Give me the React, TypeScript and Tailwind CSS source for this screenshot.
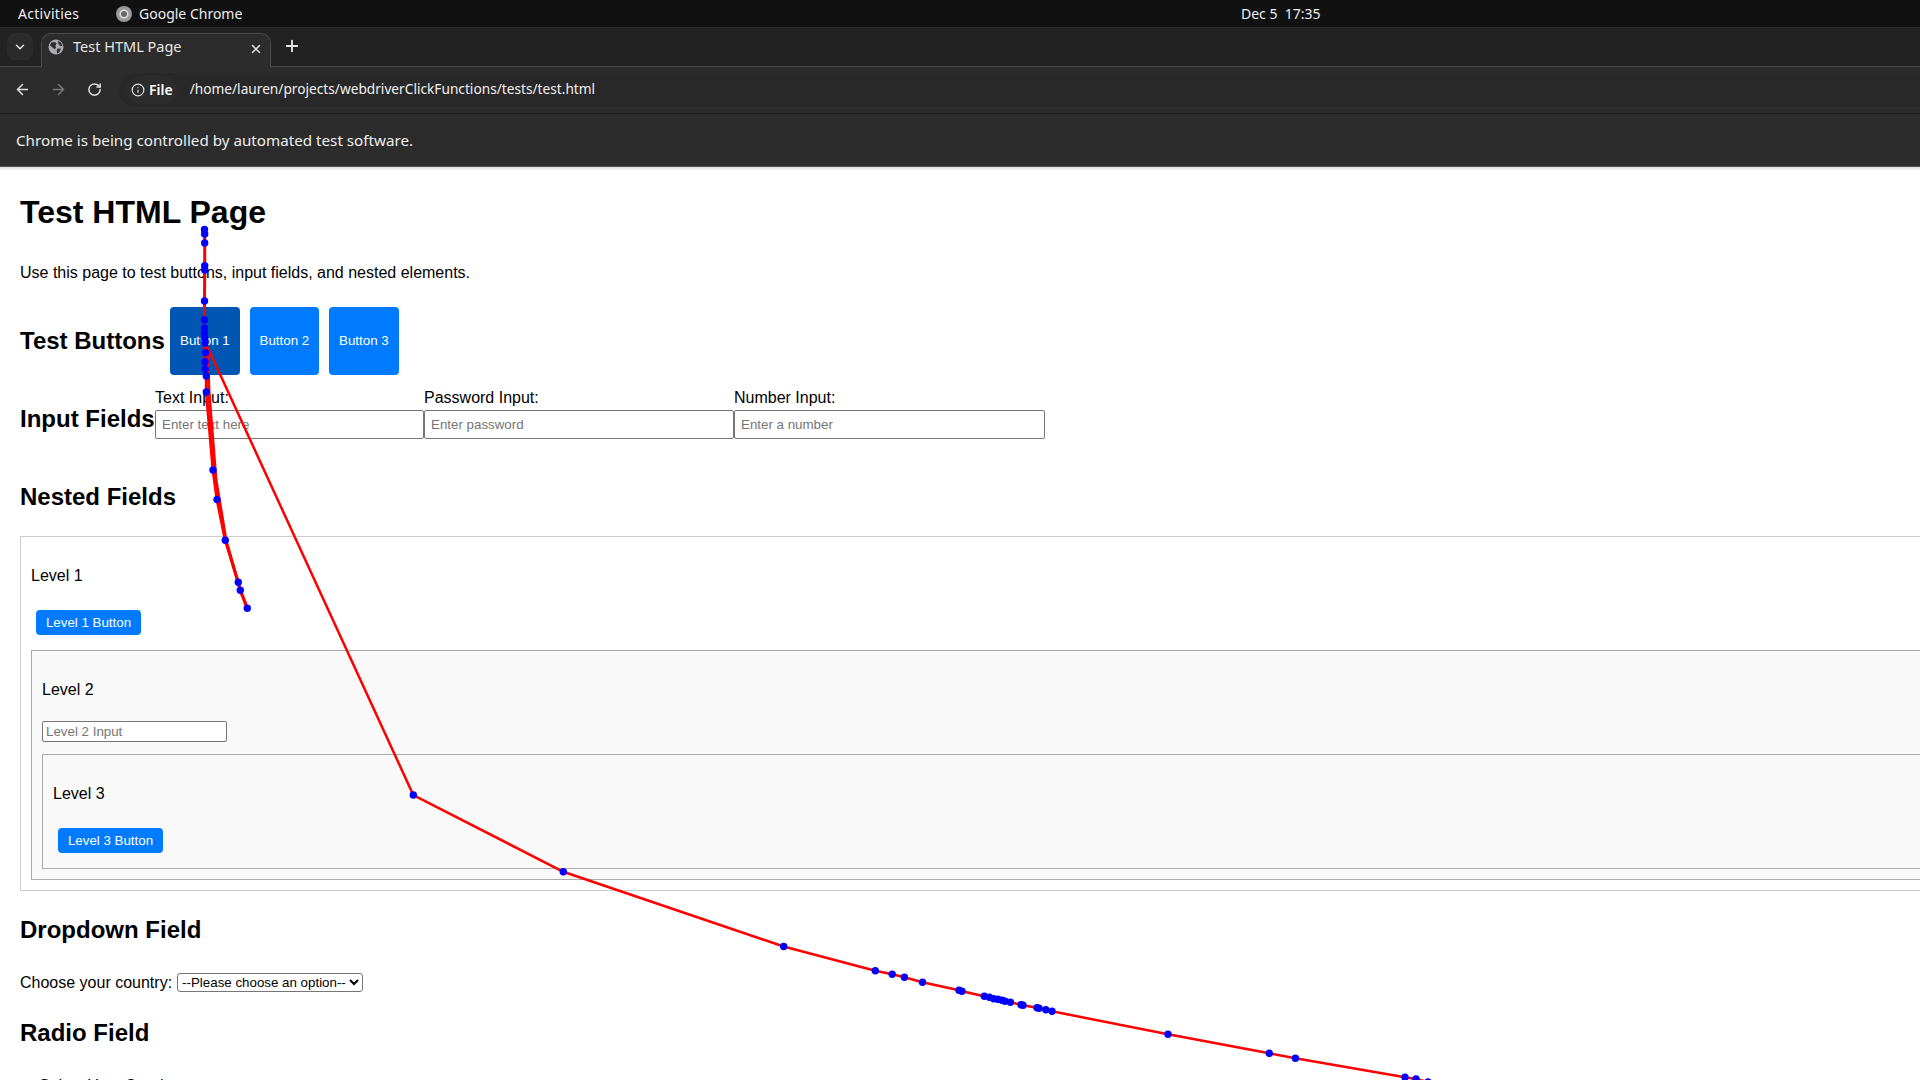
import { ArrowLeft, ArrowRight, ChevronDown, Info, Plus, RotateCw, X } from 'lucide-react'

const pageFont = "font-['Liberation_Sans',Arial,sans-serif]"
const chromeFont = "font-['Noto_Sans',sans-serif]"

const trailOne: [number, number][] = [
  [204.5, 229.5], [204.7, 234], [204.7, 243], [204.7, 265.7], [204.7, 270], [204.5, 301], [204.5, 320],
  [204.5, 328], [204.5, 333], [204.6, 338], [204.8, 343], [205.5, 352.7], [205, 361.7], [205.3, 369],
  [206.3, 376], [206.3, 392], [213, 470], [217, 499.6], [225.3, 540.3], [238.3, 582.3], [240.3, 590.3], [247.3, 608.3],
]

const trailBack: [number, number][] = [
  [247.3, 608.3], [240.3, 590.3], [226, 540.3], [216, 480], [209, 392], [207.5, 347],
]

const trailTwo: [number, number][] = [
  [207.5, 347], [413.3, 795], [563.3, 871.8], [783.7, 946.5], [875.3, 970.7], [892.2, 974.3], [904.4, 977.3],
  [922.5, 982.3], [959, 990.3], [962, 991.3], [984.3, 996.3], [989.4, 997.3], [993.6, 998.7], [997.8, 999.3],
  [1002, 1000.3], [1005, 1001.3], [1010.4, 1002.3], [1021, 1004.7], [1023, 1005.3], [1037, 1007.7], [1039, 1008.3],
  [1045.8, 1009.7], [1052, 1011.3], [1168, 1034.3], [1269.3, 1053.3], [1295.4, 1058.3], [1405, 1077.3], [1416, 1079], [1428, 1082],
]

function toPoints(list: [number, number][]) {
  return list.map(([x, y]) => `${x},${y}`).join(' ')
}

function MouseTrail() {
  return (
    <svg className="absolute left-0 top-0 pointer-events-none" width="1920" height="1080" viewBox="0 0 1920 1080">
      <polyline points={toPoints(trailOne)} fill="none" stroke="#ff0000" strokeWidth="3" />
      <polyline points={toPoints(trailBack)} fill="none" stroke="#ff0000" strokeWidth="3" />
      <polyline points={toPoints(trailTwo)} fill="none" stroke="#ff0000" strokeWidth="2.5" />
      {[...trailOne, ...trailTwo.slice(1)].map(([x, y]) => (
        <circle key={`${x}-${y}`} cx={x} cy={y} r="3.7" fill="#0000ff" />
      ))}
    </svg>
  )
}

function ChromeLogo() {
  return (
    <svg width="16" height="16" viewBox="0 0 16 16">
      <circle cx="8" cy="8" r="8" fill="#9a9a9a" />
      <circle cx="8" cy="8" r="4.6" fill="#dcdcdc" />
      <circle cx="8" cy="8" r="3" fill="#6a6a6a" />
    </svg>
  )
}

function GlobeIcon() {
  return (
    <svg width="16" height="16" viewBox="0 0 16 16">
      <circle cx="8" cy="8" r="7.5" fill="#a9acb0" />
      <path d="M3.2 3.6 L7 3 L8.6 4.6 L7.4 6.4 L8 8.4 L6.6 10.6 L4.6 8.4 L2 6.4 Z" fill="#2e2e2e" />
      <path d="M10 1.6 L13.4 4 L14.4 7.4 L12 6.8 L10.4 4.8 Z M9.6 9.6 L13 9.8 L11 13.8 L9 14.4 L8.8 11.6 Z" fill="#2e2e2e" />
    </svg>
  )
}

function BlueButton({ label }: { label: string }) {
  return (
    <button className="m-[5px] h-[25px] w-[105px] shrink-0 rounded-[4px] bg-[#007bff] text-[13.33px] text-white block">
      {label}
    </button>
  )
}

function TestInput({ label, placeholder, className }: { label: string; placeholder: string; className: string }) {
  return (
    <div className={`flex flex-col ${className}`}>
      <label className="block h-[21px] text-[16px] leading-[18px] text-black">{label}</label>
      <input
        placeholder={placeholder}
        className="h-[29px] w-full rounded-[2px] border border-[#767676] bg-white px-[6px] text-[13.33px] placeholder:text-[#757575]"
      />
    </div>
  )
}

function BrowserChrome() {
  return (
    <div className={`shrink-0 ${chromeFont} text-white`}>
      <div className="relative flex h-[27px] items-center bg-[#111111] pl-[18px] text-[14px] text-[#eeeeee]">
        <span className="w-[98px] tracking-[0.3px]">Activities</span>
        <span className="flex items-center gap-[7px]">
          <ChromeLogo />
          Google Chrome
        </span>
        <span className="absolute left-[1241px] text-[14px]">Dec 5&nbsp; 17:35</span>
      </div>
      <div className="flex h-[40px] items-end border-t border-[#2a2a2a] border-b-[#4a4a4a] border-b bg-[#222222]">
        <div className="mb-[6px] ml-[7px] flex h-[27px] w-[26px] items-center justify-center rounded-[8px] bg-[#2b2b2b]">
          <ChevronDown size={14} strokeWidth={2.5} color="#e6e6e6" />
        </div>
        <div className="relative ml-[8px] flex h-[34px] w-[230px] items-center rounded-t-[10px] border border-b-0 border-[#4a4a4a] bg-[#2c2c2c] pb-[7px] pl-[6px] text-[14.5px] text-[#e6e6e6] -mb-px">
          <GlobeIcon />
          <span className="ml-[9px]">Test HTML Page</span>
          <X size={14} strokeWidth={2.5} color="#e6e6e6" className="absolute right-[7px] top-[8px]" />
        </div>
        <Plus size={18} strokeWidth={2.5} color="#e6e6e6" className="mb-[11px] ml-[12px]" />
      </div>
      <div className="flex h-[47px] items-center border-b border-[#1d1d1d] bg-[#2c2c2c] pb-[1px]">
        <ArrowLeft size={17} strokeWidth={2.2} color="#dddddd" className="ml-[14px]" />
        <ArrowRight size={17} strokeWidth={2.2} color="#777777" className="ml-[19px]" />
        <RotateCw size={15} strokeWidth={2.4} color="#dddddd" className="ml-[20px]" />
        <div className="ml-[17px] flex h-[34px] flex-1 items-center rounded-l-full bg-[#282828] pl-[8px]">
          <div className="flex h-[28px] items-center gap-[4px] rounded-full bg-[#2c2c2c] px-[4px] text-[14px] font-semibold">
            <Info size={14} strokeWidth={2} color="#e6e6e6" />
            <span>File</span>
          </div>
          <span className="ml-[13px] text-[13.7px] text-[#f0f0f0]">/home/lauren/projects/webdriverClickFunctions/tests/test.html</span>
        </div>
      </div>
      <div className="flex h-[53px] items-center border-b border-[#555555] bg-[#2c2c2c] pl-[16px] text-[15.2px] text-[#eeeeee]">
        Chrome is being controlled by automated test software.
      </div>
    </div>
  )
}

export default function App() {
  return (
    <div className={`relative h-[1080px] w-[1920px] overflow-hidden bg-white ${pageFont}`}>
      <BrowserChrome />
      <div className="h-[4px] bg-gradient-to-b from-[#dddddd] to-white" />
      <main className="pl-[20px] text-black">
        <h1 className="pt-[23px] text-[32px] leading-[37px] font-bold">Test HTML Page</h1>
        <p className="mt-[33px] text-[16px] leading-[18px]">Use this page to test buttons, input fields, and nested elements.</p>

        <div className="mt-[25px] flex h-[68px] items-center">
          <h2 className="text-[24px] leading-[28px] font-bold">Test Buttons</h2>
          <button className="ml-[5px] h-[68px] w-[70px] rounded-[4px] bg-[#0056b3] text-[13.33px] text-white">Button 1</button>
          <button className="ml-[10px] h-[68px] w-[69px] rounded-[4px] bg-[#007bff] text-[13.33px] text-white">Button 2</button>
          <button className="ml-[10px] h-[68px] w-[70px] rounded-[4px] bg-[#007bff] text-[13.33px] text-white">Button 3</button>
        </div>

        <div className="mt-[14px] flex items-center">
          <h2 className="w-[135px] pt-[10px] text-[24px] leading-[28px] font-bold whitespace-nowrap">Input Fields</h2>
          <TestInput label="Text Input:" placeholder="Enter text here" className="w-[269px]" />
          <TestInput label="Password Input:" placeholder="Enter password" className="w-[310px]" />
          <TestInput label="Number Input:" placeholder="Enter a number" className="w-[311px]" />
        </div>

        <h2 className="mt-[44px] text-[24px] leading-[28px] font-bold">Nested Fields</h2>

        <section className="mt-[25px] w-[2000px] border border-[#cccccc] p-[10px]">
          <p className="mt-[20px] mb-[25px] text-[16px] leading-[18px]">Level 1</p>
          <BlueButton label="Level 1 Button" />
          <div className="mt-[15px] border border-[#aaaaaa] bg-[#f9f9f9] p-[10px]">
            <p className="mt-[20px] mb-[22px] text-[16px] leading-[18px]">Level 2</p>
            <input
              placeholder="Level 2 Input"
              className="block h-[21px] w-[185px] rounded-[2px] border border-[#767676] bg-white px-[3px] text-[13.33px] placeholder:text-[#757575]"
            />
            <div className="mt-[12px] border border-[#aaaaaa] bg-[#f9f9f9] p-[10px]">
              <p className="mt-[20px] mb-[25px] text-[16px] leading-[18px]">Level 3</p>
              <BlueButton label="Level 3 Button" />
            </div>
          </div>
        </section>

        <h2 className="mt-[25px] text-[24px] leading-[28px] font-bold">Dropdown Field</h2>
        <div className="mt-[29px] flex h-[19px] items-center gap-[5px]">
          <label className="text-[16px] leading-[18px]">Choose your country:</label>
          <select className="h-[19px] w-[186px] rounded-[3px] border border-[#767676] bg-white text-[13.33px] text-black">
            <option>--Please choose an option--</option>
          </select>
        </div>

        <h2 className="mt-[27px] text-[24px] leading-[28px] font-bold">Radio Field</h2>
        <p className="mt-[30px] ml-[19px] text-[16px] leading-[18px]">Select Your Gender:</p>
      </main>
      <MouseTrail />
    </div>
  )
}
